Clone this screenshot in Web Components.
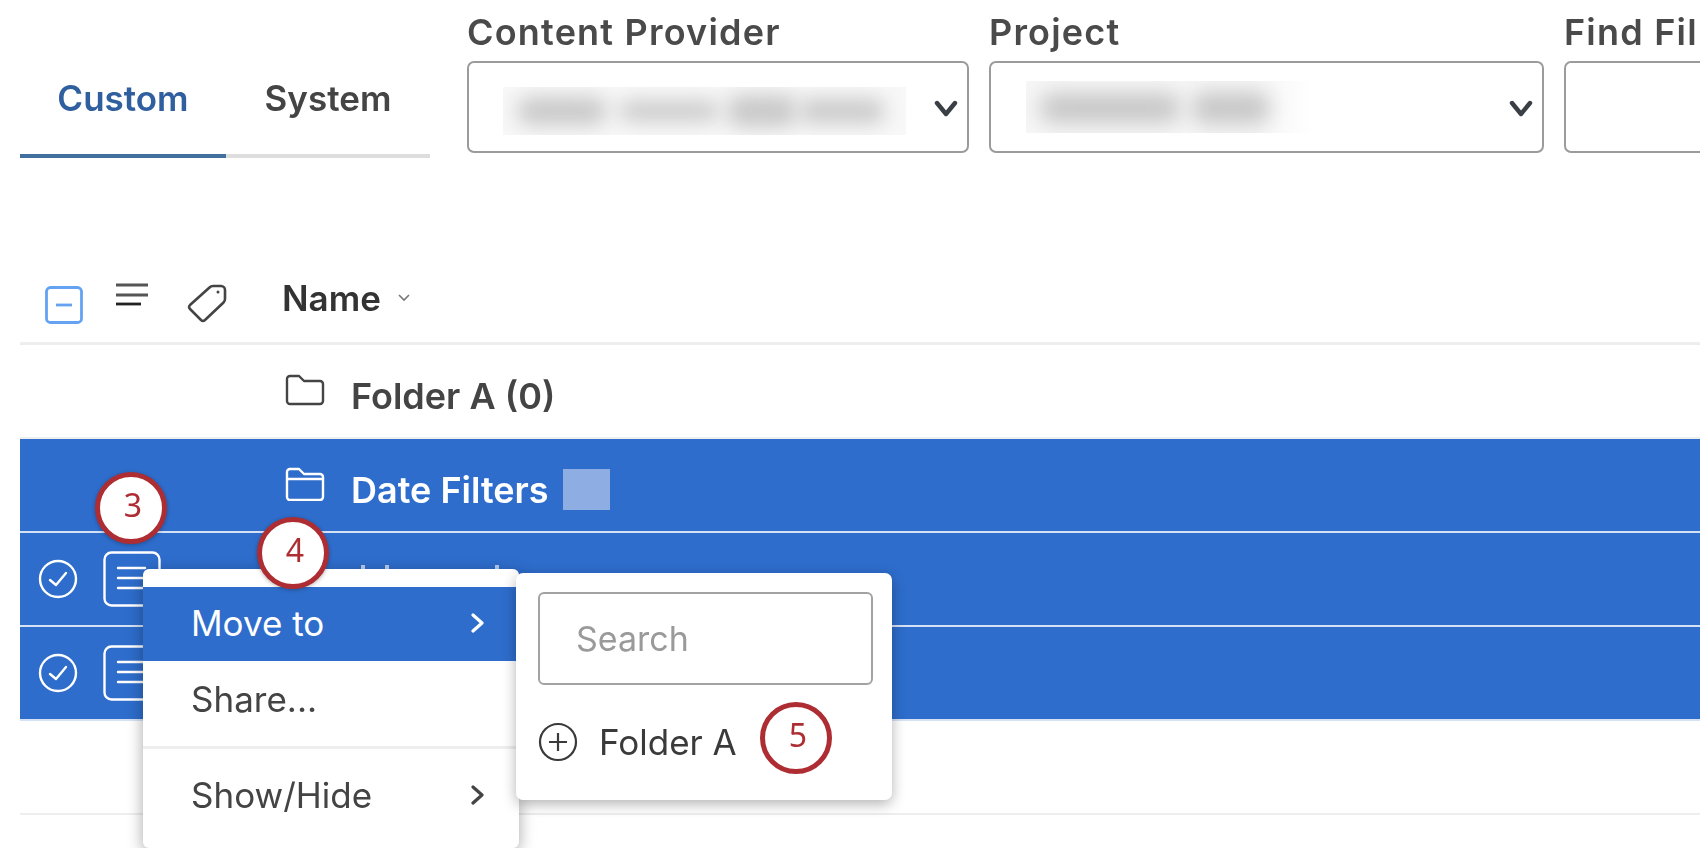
<!DOCTYPE html>
<html>
<head>
<meta charset="utf-8">
<title>Filters</title>
<style>
    html, body { margin: 0; height: 100%; overflow: hidden; background: #fff; }
    body { font-family: Inter, "Noto Sans", sans-serif; color: #3d3d3d; }
</style>
</head>
<body>
<filter-page>
    <filter-bar slot="bar">
        <filter-tabs></filter-tabs>
        <filter-field label="Content Provider" width="502">
            <i style="left:14px;width:90px;height:28px;top:10px"></i>
            <i style="left:116px;width:100px;height:20px;top:14px"></i>
            <i style="left:224px;width:70px;height:32px;top:8px"></i>
            <i style="left:296px;width:86px;height:24px;top:12px"></i>
        </filter-field>
        <filter-field label="Project" width="555" shade="288">
            <i style="left:14px;width:140px;height:30px;top:12px"></i>
            <i style="left:166px;width:78px;height:32px;top:11px"></i>
        </filter-field>
        <filter-field label="Find Fil" width="300" plain></filter-field>
    </filter-bar>
    <list-header slot="list"></list-header>
    <list-row slot="list" kind="folder" label="Folder A (0)"></list-row>
    <list-row slot="list" kind="folder-open" label="Date Filters" selected redacted></list-row>
    <list-row slot="list" kind="item" selected tips></list-row>
    <list-row slot="list" kind="item" selected></list-row>
    <list-row slot="list" kind="empty"></list-row>

    <context-menu slot="overlay"></context-menu>
    <move-submenu slot="overlay"></move-submenu>
    <callout-badge slot="overlay" num="3" style="left:95px;top:472px"></callout-badge>
    <callout-badge slot="overlay" num="4" style="left:257px;top:517px"></callout-badge>
    <callout-badge slot="overlay" num="5" clear style="left:760px;top:702px"></callout-badge>
</filter-page>

<script>
    const ICONS = {
        chevronDown: `<svg viewBox="0 0 24 24" width="24" height="24" fill="none" stroke="currentColor" stroke-width="4.400" stroke-linecap="round" stroke-linejoin="round"><path d="M3 7l9 11 9-11"/></svg>`,
        chevronRight: `<svg viewBox="0 0 14 24" width="14" height="24" fill="none" stroke="currentColor" stroke-width="3.200" stroke-linecap="round" stroke-linejoin="round"><path d="M2 4l9 8-9 8"/></svg>`,
        folder: `<svg viewBox="0 0 40 32" width="40" height="32" fill="none" stroke="currentColor" stroke-width="2.400" stroke-linejoin="round"><path d="M2 5a3 3 0 0 1 3-3h9l5 5h16a3 3 0 0 1 3 3v17a3 3 0 0 1-3 3H5a3 3 0 0 1-3-3z"/></svg>`,
        folderOpen: `<svg viewBox="0 0 40 34" width="40" height="34" fill="none" stroke="currentColor" stroke-width="2.400" stroke-linejoin="round"><path d="M2 12V5a3 3 0 0 1 3-3h9l5 5h16a3 3 0 0 1 3 3v2"/><path d="M2 12h36v18a3 3 0 0 1-3 3H5a3 3 0 0 1-3-3z"/></svg>`,
        check: `<svg viewBox="0 0 40 40" width="40" height="40" fill="none" stroke="currentColor" stroke-width="2.400" stroke-linecap="round" stroke-linejoin="round"><circle cx="20" cy="20" r="18"/><path d="M12 21l6 5 10-12"/></svg>`,
        doc: `<svg viewBox="0 0 58 56" width="58" height="56" fill="none" stroke="currentColor" stroke-width="2.400" stroke-linecap="round"><rect x="1.500" y="1.500" width="55" height="53" rx="7"/><path d="M15 17h27M15 27h27M15 37h27"/></svg>`,
        lines: `<svg viewBox="0 0 34 24" width="34" height="24" fill="none" stroke="#555" stroke-width="2.800"><path d="M1 2h32M1 12h32"/><path d="M1 21h25" stroke="#222"/></svg>`,
        tag: `<svg viewBox="0 0 40 40" width="40" height="40" fill="none" stroke="#444" stroke-width="2.600" stroke-linejoin="round"><path d="M26 3h8a4 4 0 0 1 4 4v9a5 5 0 0 1-1.500 3.500L18 37a3 3 0 0 1-4 0L3 26a3 3 0 0 1 0-4L22.500 4.500A5 5 0 0 1 26 3z"/><circle cx="31" cy="9" r="1.500" fill="#444" stroke="none"/></svg>`,
        minus: `<svg viewBox="0 0 38 38" width="38" height="38" fill="none" stroke="#63a3f2" stroke-width="2.800"><rect x="1.500" y="1.500" width="35" height="35" rx="4"/><path d="M11 19h16"/></svg>`,
        plus: `<svg viewBox="0 0 40 40" width="40" height="40" fill="none" stroke="#3a3a3a" stroke-width="2.200"><circle cx="20" cy="20" r="18"/><path d="M20 11v18M11 20h18"/></svg>`
    };

    class FilterPage extends HTMLElement {
        constructor() {
            super();
            this.attachShadow({ mode: 'open' }).innerHTML = `
            <style>
                :host { display: block; position: relative; width: 1700px; height: 848px; overflow: hidden; filter: blur(.7px); }
                .bar { height: 242px; }
                .list { display: flex; flex-direction: column; padding-left: 20px; }
            </style>
            <div class="bar"><slot name="bar"></slot></div>
            <div class="list"><slot name="list"></slot></div>
            <slot name="overlay"></slot>`;
        }
    }

    class FilterBar extends HTMLElement {
        constructor() {
            super();
            this.attachShadow({ mode: 'open' }).innerHTML = `
            <style>
                :host { display: flex; align-items: flex-start; gap: 20px; padding: 14px 0 0 20px; width: 2000px; }
            </style>
            <slot></slot>`;
        }
    }

    class FilterTabs extends HTMLElement {
        constructor() {
            super();
            this.attachShadow({ mode: 'open' }).innerHTML = `
            <style>
                :host { display: flex; width: 410px; margin: 56px 17px 0 0; font-size: 35px; font-weight: 600; }
                div { display: flex; justify-content: center; align-items: center; height: 56px; padding-bottom: 28px; border-bottom: 4px solid #dedede; }
                .on { width: 206px; color: #2f5f9e; border-color: #41709f; }
                .off { width: 204px; color: #444; }
            </style>
            <div class="on">Custom</div><div class="off">System</div>`;
        }
    }

    class FilterField extends HTMLElement {
        constructor() {
            super();
            const g = (n) => this.getAttribute(n);
            const plain = this.hasAttribute('plain');
            const shaded = this.hasAttribute('shade');
            const blur = plain ? '' : `
                <div class="blur ${shaded ? 'p' : 'c'}"><slot></slot></div>
                <span class="arrow">${ICONS.chevronDown}</span>`;
            this.attachShadow({ mode: 'open' }).innerHTML = `
            <style>
                :host { display: block; flex: none; width: ${g('width')}px; }
                label { display: block; height: 47px; line-height: 36px; font-size: 36px; letter-spacing: 1.2px; font-weight: 600; color: #4a4a4a; white-space: nowrap; }
                .box { position: relative; height: 88px; border: 2px solid #9b9b9b; border-radius: 7px; background: #fff; }
                .blur { position: absolute; background: #f8f8f8; overflow: hidden; }
                .c { left: 34px; top: 24px; width: 403px; height: 48px; }
                .p { left: 35px; top: 18px; width: 288px; height: 52px; background: linear-gradient(90deg, #f6f6f6 80%, #fff); }
                ::slotted(i) { position: absolute; background: #c8c8c8; filter: blur(10px); border-radius: 14px; }
                .arrow { position: absolute; right: 9px; top: 33px; color: #3a3f45; display: flex; }
            </style>
            <label>${g('label')}</label>
            <div class="box">${blur}</div>`;
        }
    }

    class ListHeader extends HTMLElement {
        constructor() {
            super();
            this.attachShadow({ mode: 'open' }).innerHTML = `
            <style>
                :host { display: grid; grid-template-columns: 25px 70px 72px 95px 1fr; height: 103px; border-bottom: 3px solid #eee; box-sizing: border-box; }
                span { display: flex; }
                .cb { grid-column: 2; padding-top: 44px; }
                .ln { padding-top: 41px; }
                .tg { padding-top: 41px; }
                .nm { font-size: 35px; font-weight: 600; color: #333; align-items: center; gap: 17px; height: 101px; padding-top: 10px; box-sizing: border-box; }
                .nm svg { width: 12px; height: 8px; }
            </style>
            <span class="cb">${ICONS.minus}</span>
            <span class="ln">${ICONS.lines}</span>
            <span class="tg">${ICONS.tag}</span>
            <span class="nm">Name <svg viewBox="0 0 12 8" fill="none" stroke="#777" stroke-width="1.600"><path d="M1 1l5 5 5-5"/></svg></span>`;
        }
    }

    class ListRow extends HTMLElement {
        constructor() {
            super();
            const kind = this.getAttribute('kind');
            const selected = this.hasAttribute('selected');
            const label = this.getAttribute('label') || '';
            let lead = '<span></span><span></span>';
            let body = '';
            if (kind === 'item') {
                lead = `<span class="ck">${ICONS.check}</span><span class="doc">${ICONS.doc}</span>`;
            }
            if (kind === 'folder' || kind === 'folder-open') {
                const icon = kind === 'folder' ? ICONS.folder : ICONS.folderOpen;
                const mask = this.hasAttribute('redacted') ? '<i class="mask"></i>' : '';
                body = `<span class="ic">${icon}</span><b>${label}</b>${mask}`;
            }
            // only the tops of the row's letters show above the menu
            if (this.hasAttribute('tips')) {
                body = '<span class="tips"><u></u><u></u><u></u></span>';
            }
            this.attachShadow({ mode: 'open' }).innerHTML = `
            <style>
                :host { display: grid; grid-template-columns: 83px 164px 1fr; align-items: center; height: 94px;
                    box-sizing: border-box; padding-left: 18px;
                    background: ${selected ? '#2e6dcc' : '#fff'}; color: ${selected ? '#fff' : '#444'};
                    border-bottom: 2px solid ${selected ? '#d5e2f5' : '#eee'}; }
                span { display: flex; }
                .doc { margin-left: -18px; }
                .name { display: flex; align-items: center; font-size: 36px; padding-top: 10px; }
                .ic { margin-right: 26px; margin-top: -12px; }
                b { font-weight: 600; }
                .mask { width: 47px; height: 41px; margin-left: 14px; background: #8eade2; margin-top: -2px; }
                .tips { margin-left: 76px; gap: 20px; transform: translateY(-17px); }
                .tips u { display: block; width: 4px; height: 5px; background: #b9cdee; }
                .tips u:last-child { margin-left: 86px; }
            </style>
            ${lead}
            <div class="name">${body}</div>`;
        }
    }

    class ContextMenu extends HTMLElement {
        constructor() {
            super();
            this.attachShadow({ mode: 'open' }).innerHTML = `
            <style>
                :host { position: absolute; left: 143px; top: 569px; width: 376px; height: 279px; box-sizing: border-box;
                    padding-top: 18px; background: #fff; border-radius: 6px; box-shadow: 0 4px 16px rgba(0,0,0,.35);
                    font-size: 35px; color: #444; }
                .item { display: flex; align-items: center; justify-content: space-between; height: 74px; padding: 0 34px 0 48px; }
                .on { background: #2e6dcc; color: #fff; padding-bottom: 2px; height: 72px; }
                .share { height: 76px; }
                hr { margin: 9px 0 0; border: 0; border-top: 3px solid #eee; }
                .last { margin-top: 9px; }
                svg { display: block; }
            </style>
            <div class="item on">Move to ${ICONS.chevronRight}</div>
            <div class="item share">Share...</div>
            <hr>
            <div class="item last">Show/Hide ${ICONS.chevronRight}</div>`;
        }
    }

    class MoveSubmenu extends HTMLElement {
        constructor() {
            super();
            this.attachShadow({ mode: 'open' }).innerHTML = `
            <style>
                :host { position: absolute; left: 516px; top: 573px; width: 376px; height: 227px; box-sizing: border-box;
                    padding: 19px 19px 0 22px; background: #fff; border-radius: 7px; box-shadow: 0 4px 14px rgba(0,0,0,.3);
                    font-size: 35px; color: #3a3a3a; }
                .search { display: flex; align-items: center; height: 93px; box-sizing: border-box; padding-left: 36px;
                    font-size: 34px; border: 2px solid #a3a3a3; border-radius: 6px; color: #9a9a9a; }
                .opt { display: flex; align-items: center; gap: 21px; margin-top: 37px; height: 40px; }
                svg { display: block; flex: none; }
            </style>
            <div class="search">Search</div>
            <div class="opt">${ICONS.plus}<span>Folder A</span></div>`;
        }
    }

    class CalloutBadge extends HTMLElement {
        constructor() {
            super();
            const clear = this.hasAttribute('clear');
            this.attachShadow({ mode: 'open' }).innerHTML = `
            <style>
                :host { position: absolute; display: flex; align-items: center; justify-content: center;
                    width: 72px; height: 72px; box-sizing: border-box; border: 5px solid #ad2d33; border-radius: 50%;
                    background: #fff; color: #ad2d33; font: 32px "Noto Sans", sans-serif;
                    padding-bottom: 7px; padding-left: 4px;
                    box-shadow: ${clear ? 'none' : '0 1px 4px rgba(0,0,0,.3)'}; }
            </style>
            <slot></slot>`;
            this.textContent = this.getAttribute('num');
        }
    }

    customElements.define('filter-page', FilterPage);
    customElements.define('filter-bar', FilterBar);
    customElements.define('filter-tabs', FilterTabs);
    customElements.define('filter-field', FilterField);
    customElements.define('list-header', ListHeader);
    customElements.define('list-row', ListRow);
    customElements.define('context-menu', ContextMenu);
    customElements.define('move-submenu', MoveSubmenu);
    customElements.define('callout-badge', CalloutBadge);
</script>
</body>
</html>
